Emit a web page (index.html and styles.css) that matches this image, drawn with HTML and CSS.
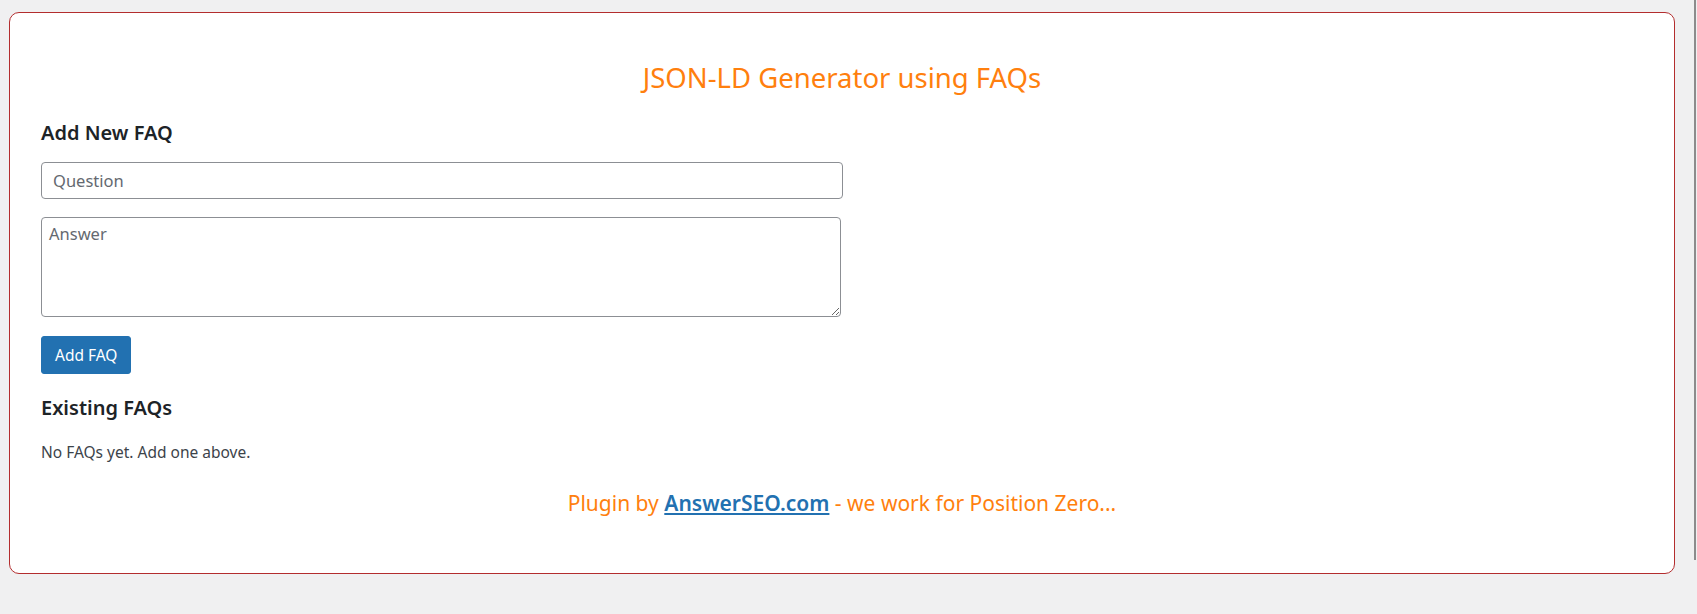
FILE: index.html
```html
<!DOCTYPE html>
<html lang="en">
<head>
<meta charset="utf-8">
<title>JSON-LD Generator using FAQs</title>
<link rel="stylesheet" href="styles.css">
</head>
<body>
<div class="page">
  <div class="card">
    <h1 class="title">JSON-LD Generator using FAQs</h1>
    <h2 class="section-title">Add New FAQ</h2>
    <form class="faq-form">
      <input class="field field-question" type="text" placeholder="Question">
      <textarea class="field field-answer" placeholder="Answer"></textarea>
      <button class="btn-primary" type="button">Add FAQ</button>
    </form>
    <h2 class="section-title section-existing">Existing FAQs</h2>
    <p class="empty">No FAQs yet. Add one above.</p>
    <p class="credit">Plugin by <a href="#" class="credit-link">AnswerSEO.com</a> - we work for Position Zero...</p>
  </div>
  <div class="scroll-line"></div>
</div>
</body>
</html>
```
FILE: styles.css
```css
html, body {
  margin: 0;
  padding: 0;
  background: #f0f0f1;
}
body {
  font-family: "Noto Sans", "Open Sans", sans-serif;
  color: #1d2327;
  width: 1697px;
  height: 614px;
  overflow: hidden;
}
.page {
  display: flex;
  align-items: flex-start;
  padding: 12px 0 0 9px;
}
.card {
  box-sizing: border-box;
  width: 1666px;
  background: #fff;
  border: 1px solid #b32d2e;
  border-radius: 10px;
  padding: 0 31px 56px;
}
.title {
  margin: 47px 0 0;
  font-size: 27.5px;
  line-height: 36px;
  font-weight: 400;
  color: #ff7f0e;
  text-align: center;
}
.section-title {
  margin: 24px 0 0;
  font-size: 20px;
  line-height: 26px;
  font-weight: 600;
  color: #1d2327;
}
.faq-form {
  display: flex;
  flex-direction: column;
  align-items: flex-start;
  margin-top: 16px;
}
.field {
  box-sizing: border-box;
  border: 1px solid #8c8f94;
  border-radius: 4px;
  background: #fff;
  font-family: "Noto Sans", "Open Sans", sans-serif;
  color: #2c3338;
  margin: 0;
}
.field::placeholder {
  color: #646970;
  opacity: 1;
}
.field-question {
  width: 802px;
  height: 37px;
  padding: 0 11px;
  font-size: 16.5px;
}
.field-answer {
  width: 800px;
  height: 100px;
  margin-top: 18px;
  padding: 4px 7px;
  font-size: 16.5px;
  line-height: 24px;
}
.btn-primary {
  margin-top: 19px;
  height: 38px;
  padding: 0 13px;
  background: #2271b1;
  border: 1px solid #2271b1;
  border-radius: 3px;
  color: #fff;
  font-family: "Noto Sans", "Open Sans", sans-serif;
  font-size: 15.5px;
}
.section-existing {
  margin-top: 21px;
}
.empty {
  margin: 20.5px 0 0;
  font-size: 15.5px;
  line-height: 21px;
  color: #3c434a;
}
.credit {
  margin: 26px 0 0;
  text-align: center;
  font-size: 21px;
  line-height: 28px;
  color: #ff7f0e;
}
.credit-link {
  color: #2271b1;
  font-weight: 600;
  text-decoration: underline;
}
.scroll-line {
  margin-left: auto;
  margin-top: -12px;
  margin-right: 1px;
  width: 2px;
  height: 560px;
  background: #8c8c8c;
}
```
